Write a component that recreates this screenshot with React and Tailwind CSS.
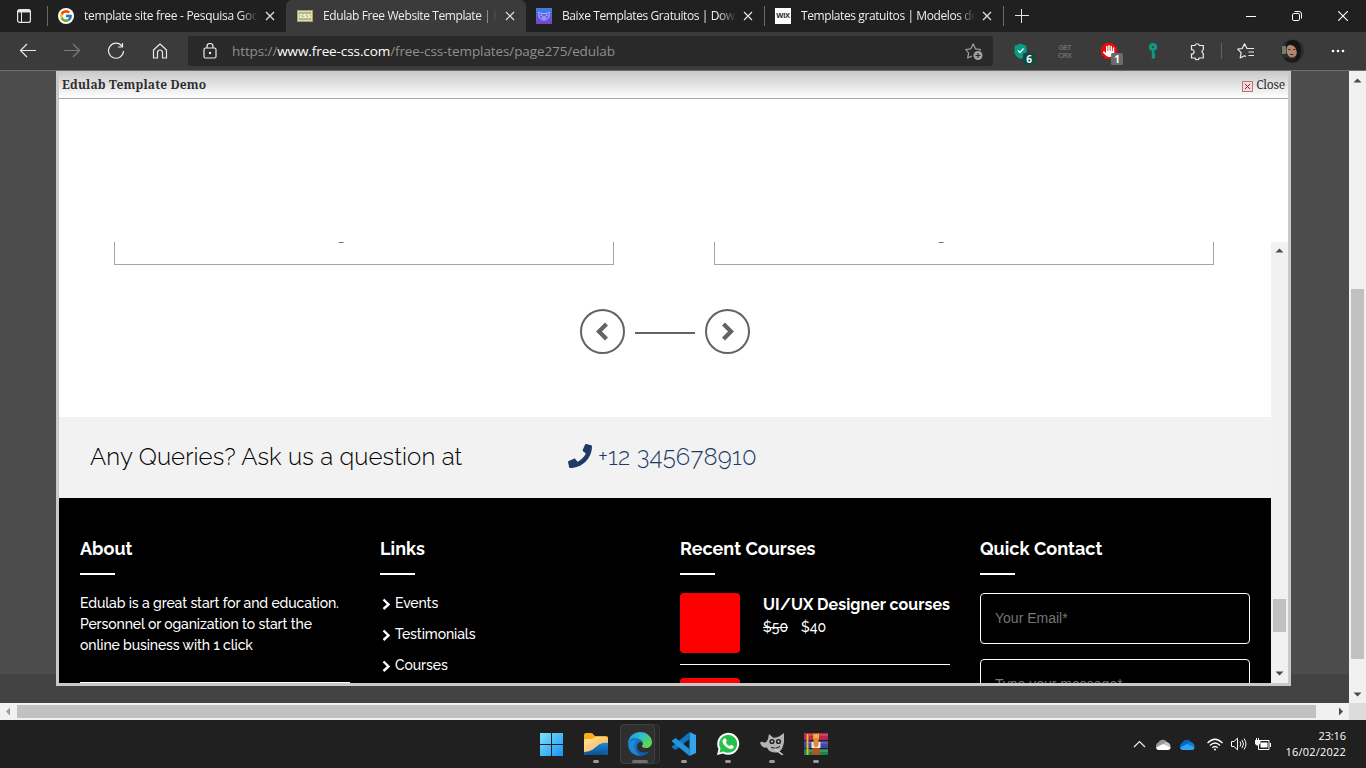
import React from "react";
import { FaHand } from "react-icons/fa6";
import { FaPhone } from "react-icons/fa";
import { FcGoogle } from "react-icons/fc";

const Close = () => (
  <svg className="shrink-0" width="10" height="10" viewBox="0 0 10 10" stroke="#e4e4e4" strokeWidth="1.2">
    <path d="M1 1l8 8M9 1L1 9" />
  </svg>
);

function Tab({ icon, title, className = "", spacing = "tracking-[-0.4px]" }) {
  return (
    <div className={"flex h-8 shrink-0 items-center pr-[11px] " + className}>
      {icon}
      <div className={"ml-[10px] h-5 w-[174px] overflow-hidden text-[12px] leading-5 whitespace-nowrap text-[#ededed] [mask-image:linear-gradient(to_right,black_90%,transparent)] " + spacing}>
        {title}
      </div>
      <div className="ml-auto flex w-[10px]">
        <Close />
      </div>
    </div>
  );
}

const CssIcon = () => (
  <svg className="shrink-0" width="16" height="12" viewBox="0 0 16 12">
    <rect width="16" height="12" fill="#a6a565" />
    <rect x="1.5" y="1.5" width="13" height="9" fill="#b9b87c" stroke="#dddcb4" />
    <text x="8" y="8.4" textAnchor="middle" fontSize="7" fontWeight="700" fill="#fff" fontFamily="Liberation Sans">css</text>
  </svg>
);

const BaixeIcon = () => (
  <svg className="shrink-0" width="16" height="16" viewBox="0 0 16 16" fill="none">
    <defs>
      <linearGradient id="bx" x1="0" y1="0" x2="0" y2="1">
        <stop stopColor="#3f7fea" />
        <stop offset="1" stopColor="#7b3fd0" />
      </linearGradient>
    </defs>
    <rect width="16" height="16" fill="url(#bx)" />
    <path d="M2 4.500q2-.5 3 1h6q1-1.500 3-1M3 5.500q-.5 3 1 4.500 1.500 2 4 2t4-2q1.500-1.500 1-4.500M4.500 7l2 1M11.500 7l-2 1M6 9.500q2-1.500 4 0-2 1.500-4 0" stroke="#b9c6ff" strokeWidth=".9" />
  </svg>
);

const WixIcon = () => (
  <div className="flex h-4 w-4 shrink-0 items-center justify-center bg-white font-['Liberation_Sans',sans-serif] text-[7.500px] leading-none font-bold tracking-[-0.3px] text-[#222]">
    WIX
  </div>
);

const GoogleIcon = () => (
  <div className="flex h-4 w-4 shrink-0 items-center justify-center rounded-full bg-white">
    <FcGoogle size={14} />
  </div>
);

const Divider = () => <div className="mt-[6px] h-5 w-px bg-[#686868]" />;

function TabBar() {
  return (
    <div className="flex h-8 bg-[#202020]">
      <div className="flex w-[47px] shrink-0 items-center pl-[17px]">
        <svg width="14" height="14" viewBox="0 0 14 14" fill="none" stroke="#e6e6e6">
          <rect x=".6" y=".6" width="12.800" height="12.800" rx="2" strokeWidth="1.200" />
          <path d="M1 2.200h12" strokeWidth="2.500" />
          <path d="M4.500 3v10" />
        </svg>
      </div>
      <Divider />
      <Tab className="w-[238px] pl-[10px]" icon={<GoogleIcon />} title="template site free - Pesquisa Goo" spacing="tracking-[-0.3px]" />
      <Tab className="w-[240px] rounded-t-md bg-[#3b3b3b] pl-[11px]" icon={<CssIcon />} title="Edulab Free Website Template | F" />
      <Tab className="w-[238px] pl-[10px]" icon={<BaixeIcon />} title="Baixe Templates Gratuitos | Down" />
      <Divider />
      <Tab className="w-[238px] pl-[10px]" icon={<WixIcon />} title="Templates gratuitos | Modelos de" />
      <Divider />
      <svg className="mt-[9px] ml-[11px]" width="14" height="14" viewBox="0 0 14 14" stroke="#e4e4e4">
        <path d="M0 6.500h14M6.500 0v14" />
      </svg>
      <div className="mr-[18px] ml-auto flex items-center gap-[36px]">
        <svg width="10" height="10" viewBox="0 0 10 10" stroke="#fff"><path d="M0 5.500h10" /></svg>
        <svg width="10" height="10" viewBox="0 0 10 10" fill="none" stroke="#fff">
          <rect x=".5" y="2.500" width="7" height="7" rx="1.300" />
          <path d="M2.500 .5h4.500a2.500 2.500 0 0 1 2.500 2.500v4.500" />
        </svg>
        <svg width="10" height="10" viewBox="0 0 10 10" stroke="#fff" strokeWidth="1.100"><path d="M0 0l10 10M10 0L0 10" /></svg>
      </div>
    </div>
  );
}

function Toolbar() {
  return (
    <div className="flex h-[39px] border-b border-[#6e6e6e] bg-[#3b3b3b]">
      <svg className="shrink-0" width="188" height="38" viewBox="0 0 188 38" fill="none" stroke="#e8e8e8" strokeWidth="1.200">
        <path d="M36 18.500H20.500M27 12l-6.500 6.500L27 25" />
        <path d="M64 18.500h15.500M73 12l6.500 6.500L73 25" stroke="#7c7c7c" />
        <path d="M122 14.200A7.500 7.500 0 1 0 123.500 19M122.500 11v4h-4.500" />
        <path d="M153.500 18l6.500-6 6.500 6v8h-4v-5.500a2.500 2.500 0 0 0-5 0V26h-4z" strokeLinejoin="round" />
      </svg>
      <div className="mt-1 flex h-[30px] w-[805px] shrink-0 items-center rounded-[3px] bg-[#292929]">
        <svg className="ml-[15px]" width="14" height="16" viewBox="0 0 14 16" fill="none" stroke="#ececec" strokeWidth="1.200">
          <rect x="1" y="5" width="12" height="10" rx="1.500" />
          <path d="M4 5V3.500a3 3 0 0 1 6 0V5" />
          <circle cx="7" cy="10" r=".6" fill="#fff" />
        </svg>
        <div className="ml-[15px] text-[13.500px] leading-5 tracking-[-0.1px] whitespace-nowrap text-[#8f8f8f]">
          https://<span className="text-white">www.free-css.com</span>/free-css-templates/page275/edulab
        </div>
        <svg className="mr-[10px] ml-auto" width="18" height="18" viewBox="0 0 18 18" fill="none" stroke="#a3a3a3" strokeWidth="1.200">
          <path d="M7 14l-4.300 2 .9-5L.8 7.500l5-.7L8.200 2l2.300 4.800 5 .7-1 1" strokeLinejoin="round" />
          <circle cx="13" cy="13.500" r="4.500" fill="#a3a3a3" stroke="none" />
          <path d="M10.500 13.500h5M13 11v5" stroke="#292929" />
        </svg>
      </div>
      <svg className="shrink-0" width="373" height="38" viewBox="993 32 373 38" fill="none" stroke="#ececec" strokeWidth="1.200" fontFamily="Open Sans">
        <path d="M1020.500 43.500l6 2.500v6q0 4-6 7-6-3-6-7v-6z" fill="#0b9d83" stroke="none" />
        <path d="M1018 50.500l2 2 3.500-4" stroke="#fff" />
        <rect x="1023" y="53" width="12" height="12" rx="1.500" fill="#0c4a43" stroke="none" />
        <text x="1029" y="63" fontSize="10" fontWeight="700" fill="#fff" stroke="none" textAnchor="middle">6</text>
        <g stroke="none" fill="#6d6d6d" fontSize="7" fontFamily="Liberation Sans" fontWeight="700">
          <text x="1058.500" y="50" textLength="13">GET</text>
          <text x="1058" y="58" textLength="14">CRX</text>
        </g>
        <path d="M1105.500 43h7l4.500 4.500v7l-4.500 4.500h-7l-4.500-4.500v-7z" fill="#e40d0d" stroke="none" />
        <g transform="translate(1103 45)"><FaHand size={12} color="#fff" stroke="none" /></g>
        <rect x="1111" y="53" width="12" height="12" rx="1.500" fill="#6b6b6b" stroke="none" />
        <text x="1117" y="63" fontSize="10" fontWeight="700" fill="#fff" stroke="none" textAnchor="middle">1</text>
        <circle cx="1153" cy="47" r="2.600" stroke="#0c9b80" strokeWidth="3" />
        <path d="M1153 50v8.500M1154 54.500h1M1154 57h1" stroke="#0c9b80" strokeWidth="2.400" />
        <path d="M1191.500 45.500h3.500a2.200 2.200 0 0 1 4.300 0h4v4.200a2 2 0 0 0 0 3.800v4.500h-4a2.200 2.200 0 0 1-4.300 0h-3.500v-4a2.200 2.200 0 1 0 0-4.300z" />
        <path d="M1221.500 43v16" stroke="#626262" strokeWidth="1" />
        <path d="M1248.500 48.500h5.500M1248.500 52h5.500M1248.500 55.500h5.500M1248.500 48.500h-1.500l-2.500-4.700-2.300 4.700-4.500.7 3.400 3.500-.9 5.300 4.300-2.300 1.500.8" strokeLinejoin="round" />
        <clipPath id="av"><circle cx="1292.500" cy="51" r="11.500" /></clipPath>
        <g clipPath="url(#av)" stroke="none">
          <rect x="1281" y="39" width="24" height="24" fill="#2a2e2b" />
          <rect x="1282" y="46" width="4" height="8" fill="#777b74" />
          <ellipse cx="1292" cy="50" rx="5.500" ry="7.500" fill="#b58570" />
          <path d="M1286 49q-1-9 7-9 8 1 8 10 0 7-3 10l-3-1q3-4 1-10-2-4-6-4-3 0-4 4z" fill="#161413" />
          <path d="M1282 64l4-7 4 2 6-1 6 6z" fill="#1d1b1b" />
          <path d="M1288 49.500h2.500M1293 49.500h2.500M1290 54.500h3.500" stroke="#4f2e28" />
        </g>
        <g fill="#fff" stroke="none"><circle cx="1333" cy="51" r="1.300" /><circle cx="1338" cy="51" r="1.300" /><circle cx="1343" cy="51" r="1.300" /></g>
      </svg>
    </div>
  );
}

const Arrow = ({ d, className = "" }) => (
  <svg className={className} width="9" height="9" viewBox="0 0 9 9" fill="#4b4b4b"><path d={d} /></svg>
);
const UP = "M.5 6.500L4.500 2.500l4 4z";
const DOWN = "M.5 2.500L4.500 6.500l4-4z";

function Heading({ children }) {
  return (
    <>
      <h3 className="h-6 text-[18px] leading-[26px] font-bold tracking-[0.02px] whitespace-nowrap">{children}</h3>
      <div className="mt-[13px] h-[2px] w-[35px] bg-white" />
    </>
  );
}

function Footer() {
  return (
    <div className="flex h-[185px] gap-[30px] overflow-hidden bg-black pt-[38px] pl-[21px] text-[14px] text-white">
      <div className="w-[270px] shrink-0">
        <Heading>About</Heading>
        <div className="mt-[18px] leading-[21px] font-medium tracking-[-0.12px] whitespace-nowrap">
          <div>Edulab is a great start for and education.</div>
          <div>Personnel or oganization to start the</div>
          <div>online business with 1 click</div>
        </div>
        <div className="mt-[26px] h-px bg-white" />
      </div>
      <div className="w-[270px] shrink-0">
        <Heading>Links</Heading>
        <div className="mt-[18px] flex flex-col gap-[10px] leading-[21px] font-medium tracking-[-0.1px]">
          {["Events", "Testimonials", "Courses"].map((t) => (
            <div key={t} className="flex items-center">
              <svg className="mr-[4px] ml-[2px]" width="9" height="12" viewBox="0 0 9 12" fill="none" stroke="#fff" strokeWidth="2.400"><path d="M1.500 1.500L6.500 6.500l-5 4.500" /></svg>
              {t}
            </div>
          ))}
        </div>
      </div>
      <div className="w-[270px] shrink-0">
        <Heading>Recent Courses</Heading>
        <div className="mt-[18px] flex h-[72px] border-b border-white">
          <div className="h-[60px] w-[60px] shrink-0 rounded-[4px] bg-[#ff0000]" />
          <div className="ml-[23px] whitespace-nowrap">
            <div className="text-[16px] leading-[23px] font-bold tracking-[0.05px]">UI/UX Designer courses</div>
            <div className="flex gap-[13px] leading-[22px] font-medium"><span className="line-through">$50</span><span>$40</span></div>
          </div>
        </div>
        <div className="mt-[13px] h-[60px] w-[60px] rounded-[4px] bg-[#ff0000]" />
      </div>
      <div className="w-[270px] shrink-0">
        <Heading>Quick Contact</Heading>
        <div className="font-['Liberation_Sans',sans-serif] text-[#757575]">
          <div className="mt-[18px] h-[51px] rounded-[4px] border border-white pl-[14px] leading-[49px]">Your Email*</div>
          <div className="mt-[15px] h-[100px] rounded-[4px] border border-white pt-[14px] pl-[14px] leading-[20px]">Type your message*</div>
        </div>
      </div>
    </div>
  );
}

const RoundButton = ({ d }) => (
  <div className="flex h-[45px] w-[45px] items-center justify-center rounded-full border-2 border-[#636363]">
    <svg width="21" height="21" viewBox="0 0 21 21" fill="none" stroke="#636363" strokeWidth="4.200"><path d={d} /></svg>
  </div>
);

function Frame() {
  return (
    <div className="flex h-[441px]">
      <div className="w-[1212px] overflow-hidden font-['Raleway','Lato',sans-serif]">
        <div className="flex h-[175px] flex-col">
          <div className="flex gap-[100px] pl-[55px] text-[15px] text-[#555]">
            {[0, 1].map((i) => (
              <div key={i} className="flex h-[23px] w-[500px] justify-center overflow-hidden border border-t-0 border-[#a5a5a5] pr-[45px]">
                <span className="-mt-[17px] h-[20px] leading-[20px]">g</span>
              </div>
            ))}
          </div>
          <div className="mt-11 flex items-center gap-[10px] pl-[521px]">
            <RoundButton d="M14.500 3L7 10.500l7.500 7.500" />
            <div className="mt-[2px] h-[2px] w-[60px] bg-[#636363]" />
            <RoundButton d="M6.500 3L14 10.500 6.500 18" />
          </div>
        </div>
        <div className="flex h-[81px] items-center bg-[#f2f2f2] pb-[2px] pl-[31px] text-[24px] font-light whitespace-nowrap">
          <div className="w-[478px] tracking-[0.12px] text-black">Any Queries? Ask us a question at</div>
          <FaPhone className="-mt-[2px]" size={24} color="#1d3b66" />
          <div className="ml-[6px] tracking-[0.2px] text-[#1d3b66]">+12 345678910</div>
        </div>
        <Footer />
      </div>
      <div className="flex w-[17px] flex-col items-center bg-[#f1f1f1]">
        <Arrow d={UP} className="mt-[4px]" />
        <div className="mt-[344px] h-[33px] w-[13px] bg-[#c1c1c1]" />
        <Arrow d={DOWN} className="mt-auto mb-[5px]" />
      </div>
    </div>
  );
}

function Modal() {
  return (
    <div className="mx-[56px] h-[615px] w-[1235px] border-x-[3px] border-b-[3px] border-[#c9c9c9] bg-white">
      <div className="flex h-[28px] items-center border-b border-[#a4a4a4] bg-gradient-to-b from-[#c8c8c8] to-white pr-[3px] pl-[3px] font-['Noto_Serif','DejaVu_Serif',serif] text-[#2f2f2f]">
        <div className="text-[12px] font-bold tracking-[0.15px]">Edulab Template Demo</div>
        <svg className="mt-[3px] mr-[3px] ml-auto" width="11" height="11" viewBox="0 0 11 11">
          <rect x=".5" y=".5" width="10" height="10" fill="#ffd6d6" stroke="#a08080" />
          <path d="M3 3l5 5M8 3L3 8" stroke="#902020" />
        </svg>
        <div className="text-[12px] tracking-[-0.2px]">Close</div>
      </div>
      <div className="h-[143px]" />
      <Frame />
    </div>
  );
}

const Dot = () => <div className="h-[3px] w-[6px] rounded-full bg-[#9a9a9a]" />;

const Item = ({ children, dot = true }) => (
  <div className="flex h-12 w-11 flex-col items-center pt-3">
    <div className="flex h-6 items-center">{children}</div>
    <div className="mt-1">{dot && <Dot />}</div>
  </div>
);

const Cloud = ({ back, mid, front }) => (
  <svg width="16" height="11" viewBox="0 0 16 11">
    <path d="M3 10a3.500 3.500 0 0 1 .3-6.500A5 5 0 0 1 12 3l1 2z" fill={back} />
    <path d="M8 5l3-2q4 .3 4.500 4l-1 3-6-2z" fill={mid} />
    <path d="M1 8.500L8 5l7.800 3.500Q15 11 13 11H3.500Q1.500 11 1 8.500z" fill={front} />
  </svg>
);

function Taskbar() {
  return (
    <div className="flex h-12 bg-[#202020]">
      <div className="ml-[530px] flex">
        <Item dot={false}>
          <svg width="24" height="24" viewBox="0 0 24 24">
            <defs><linearGradient id="wn" x1="0" y1="0" x2="1" y2="1"><stop stopColor="#7fe3fc" /><stop offset="1" stopColor="#1593f2" /></linearGradient></defs>
            <path d="M0 1H11v11H0zM12 1H23v11H12zM0 13H11v11H0zM12 13H23v11H12z" fill="url(#wn)" />
          </svg>
        </Item>
        <Item>
          <svg width="24" height="24" viewBox="0 0 24 24">
            <defs>
              <linearGradient id="f1" x1="0" y1="0" x2="1" y2="1"><stop stopColor="#ffe3a0" /><stop offset="1" stopColor="#f5ae4e" /></linearGradient>
              <linearGradient id="f2" x1="0" y1="0" x2="0" y2="1"><stop stopColor="#1e88d4" /><stop offset="1" stopColor="#0a4f97" /></linearGradient>
            </defs>
            <path d="M0 9V3q0-2 2-2h6l3 3h11q2 0 2 2v6H0z" fill="#f8ad12" />
            <path d="M0 9q0-2 2-2h6l3-2h11q2 0 2 2v13q0 3-3 3H3q-3 0-3-3z" fill="url(#f1)" />
            <path d="M0 20q4 0 8-2 4-3 7-5.500 4-2.500 9-1.500v9q0 3-3 3H3q-3 0-3-3z" fill="url(#f2)" />
          </svg>
        </Item>
        <div className="relative flex h-12 w-11 flex-col items-center pt-3">
          <div className="absolute top-1 left-[2px] h-10 w-10 rounded border border-[#343434] bg-[#272727]" />
          <div className="absolute top-1 left-[2px] h-10 w-[35px] rounded border border-[#404040] bg-[#2f2f2f]" />
          <svg className="relative" width="24" height="24" viewBox="0 0 24 24">
            <defs>
              <linearGradient id="e1" x1="0" y1="0" x2="1" y2=".6"><stop stopColor="#1b9be0" /><stop offset=".5" stopColor="#31bdd0" /><stop offset="1" stopColor="#62d84a" /></linearGradient>
              <linearGradient id="e2" x1="0" y1="0" x2="1" y2="1"><stop stopColor="#1787d8" /><stop offset="1" stopColor="#0b4f9c" /></linearGradient>
            </defs>
            <path d="M0 11C1 4 6 0 12 0c7 0 12 5 12 10 0 4-3 6-6 6-2.500 0-4.500-1-4-2 2-3 0-7-5-7-4 0-7 1.500-9 4z" fill="url(#e1)" />
            <path d="M0 12c0-5 4-7 8.500-6 3 .5 5.500 2.500 5.800 5-2-2.500-5.300 0-5.300 4 0 5 6 7 13 4-3 4-7 5-10 5C5 24 0 19 0 12z" fill="url(#e2)" />
            <path d="M8 8q-5 8 4 15.800Q3 23 1 15 .500 9 8 8z" fill="#2aa1e6" opacity=".5" />
          </svg>
          <div className="relative mt-1 h-[3px] w-4 rounded-full bg-[#6f6f6f]" />
        </div>
        <Item>
          <svg width="24" height="24" viewBox="0 0 24 24">
            <path d="M17.500 0L24 3v18l-6.500 3z" fill="#30a4ee" />
            <path d="M17.500 0v7L3.500 18 0 15.500v-1z" fill="#1076bd" />
            <path d="M0 8.500L3.500 6l14 11v7L0 9.500z" fill="#2196df" />
          </svg>
        </Item>
        <Item>
          <svg width="24" height="24" viewBox="0 0 24 24">
            <path d="M1 23L2.500 17A11 11 0 1 1 7 21.500z" fill="#fff" />
            <path d="M3.300 20.700L4.500 16.500a9 9 0 1 1 3 3z" fill="#27c04c" />
            <path d="M8 6.500q1.500-.7 2 .5l.7 1.700q.2.600-.9 1.700 1.500 2.800 4 3.700l1.200-1.400 2.700 1.300q.4 3-3 3-4-.6-7-4.500-2.600-3.600.3-6z" fill="#fff" />
          </svg>
        </Item>
        <Item>
          <svg width="24" height="24" viewBox="0 0 24 24">
            <path d="M0 11q1-2 3-1 3 2 5-3l1-5 4 3.500q3 .5 6-1L24 1q1 7-1 13-1 5-6 6.500Q9 21 7 15.500q-5 1-7-4.500z" fill="#b3b3b3" />
            <circle cx="12" cy="9.500" r="2.600" fill="#222" /><circle cx="12" cy="9.500" r="1" fill="#ddd" />
            <circle cx="18.500" cy="9.500" r="2.600" fill="#222" /><circle cx="18.500" cy="9.500" r="1" fill="#ddd" />
            <path d="M11 15.500q5 2 9-1" stroke="#222" fill="none" /><path d="M15 16l8.500 6.500-1.500.800L14.500 18z" fill="#ccc" />
          </svg>
        </Item>
        <Item>
          <svg width="24" height="24" viewBox="0 0 24 24">
            <rect y="1" width="24" height="7" fill="#b92850" /><rect y="9" width="24" height="7" fill="#4545a8" /><rect y="17" width="24" height="6" fill="#188447" />
            <path d="M5 3h19M5 19h19" stroke="#fff" opacity=".3" /><path d="M5 11h19" stroke="#aab" opacity=".5" />
            <path d="M0 8.500h24M0 16.500h24" stroke="#202020" />
            <path d="M3.500 2v21" stroke="#e6b32e" strokeWidth="2" />
            <path d="M8.500 16h7v7h-7z" fill="#b3541a" /><path d="M9 7l.500-6 2 1.500L12 1l1 1.500L15 1v6z" fill="#f4b42c" />
            <path d="M7.500 10h9v6h-9z" fill="#f0e4d6" /><path d="M9.500 6h5v7l-2.500 3-2.500-3z" fill="#de8d36" />
          </svg>
        </Item>
      </div>
      <div className="mr-[19px] ml-auto flex items-center text-white">
        <svg width="13" height="8" viewBox="0 0 13 8" fill="none" stroke="#eee" strokeWidth="1.200"><path d="M1 7l5.500-5.500L12 7" /></svg>
        <div className="ml-[9px]"><Cloud back="#999" mid="#c2c2c2" front="#fff" /></div>
        <div className="ml-2"><Cloud back="#0b62bc" mid="#117bd6" front="#2aa7ef" /></div>
        <svg className="ml-3" width="16" height="13" viewBox="0 0 16 13" fill="none" stroke="#fff" strokeWidth="1.200">
          <path d="M.5 5q7.500-7.500 15 0M3 7.500q5-5 10 0M5.300 9.800q2.700-2.600 5.400 0" /><circle cx="8" cy="11.500" r="1" fill="#fff" stroke="none" />
        </svg>
        <svg className="ml-2" width="16" height="14" viewBox="0 0 16 14" fill="none" stroke="#fff">
          <path d="M.5 4.500H3L6.500 1.200v11.600L3 9.500H.5zM9 4.500q1.800 2.500 0 5M11 3q3 4 0 8M13 1.500q4 5.500 0 11" />
        </svg>
        <svg className="ml-2" width="16" height="13" viewBox="0 0 16 13" fill="none" stroke="#fff">
          <path d="M5 2.500h9v9H3.500V7" /><rect x="5.500" y="4.500" width="7" height="5" fill="#fff" stroke="none" /><path d="M15.500 5v4" />
          <path d="M0 2.500h5v2.500L3.500 7h-2L0 5zM1.500 0v2.500M3.500 0v2.500" fill="#fff" />
        </svg>
        <div className="ml-[14px] w-[62px] pr-px text-right text-[11px] leading-4 tracking-[0.2px]"><div className="tracking-[-0.1px]">23:16</div><div>16/02/2022</div></div>
      </div>
    </div>
  );
}

export default function App() {
  return (
    <div className="h-[768px] w-[1366px] overflow-hidden bg-[#4c4c4c] font-['Segoe_UI','Open_Sans','Noto_Sans',sans-serif]">
      <TabBar />
      <Toolbar />
      <div className="flex h-[632px]">
        <div className="w-[1349px] overflow-hidden bg-[linear-gradient(#4c4c4c_603px,#434343_603px)]"><Modal /></div>
        <div className="flex w-[17px] flex-col items-center bg-[#f1f1f1]">
          <Arrow d={UP} className="mt-[5px]" />
          <div className="mt-[204px] h-[370px] w-[13px] bg-[#c1c1c1]" />
          <Arrow d={DOWN} className="mt-auto mb-[4px]" />
        </div>
      </div>
      <div className="flex h-[17px] items-center bg-[#f1f1f1]">
        <Arrow d="M6 .5L2 4.500l4 4z" className="ml-1 opacity-50" />
        <div className="ml-1 h-[13px] w-[1299px] bg-[#c1c1c1]" />
        <Arrow d="M3 .5l4 4-4 4z" className="ml-5" />
        <div className="ml-auto h-[17px] w-[17px] bg-[#dcdcdc]" />
      </div>
      <Taskbar />
    </div>
  );
}
